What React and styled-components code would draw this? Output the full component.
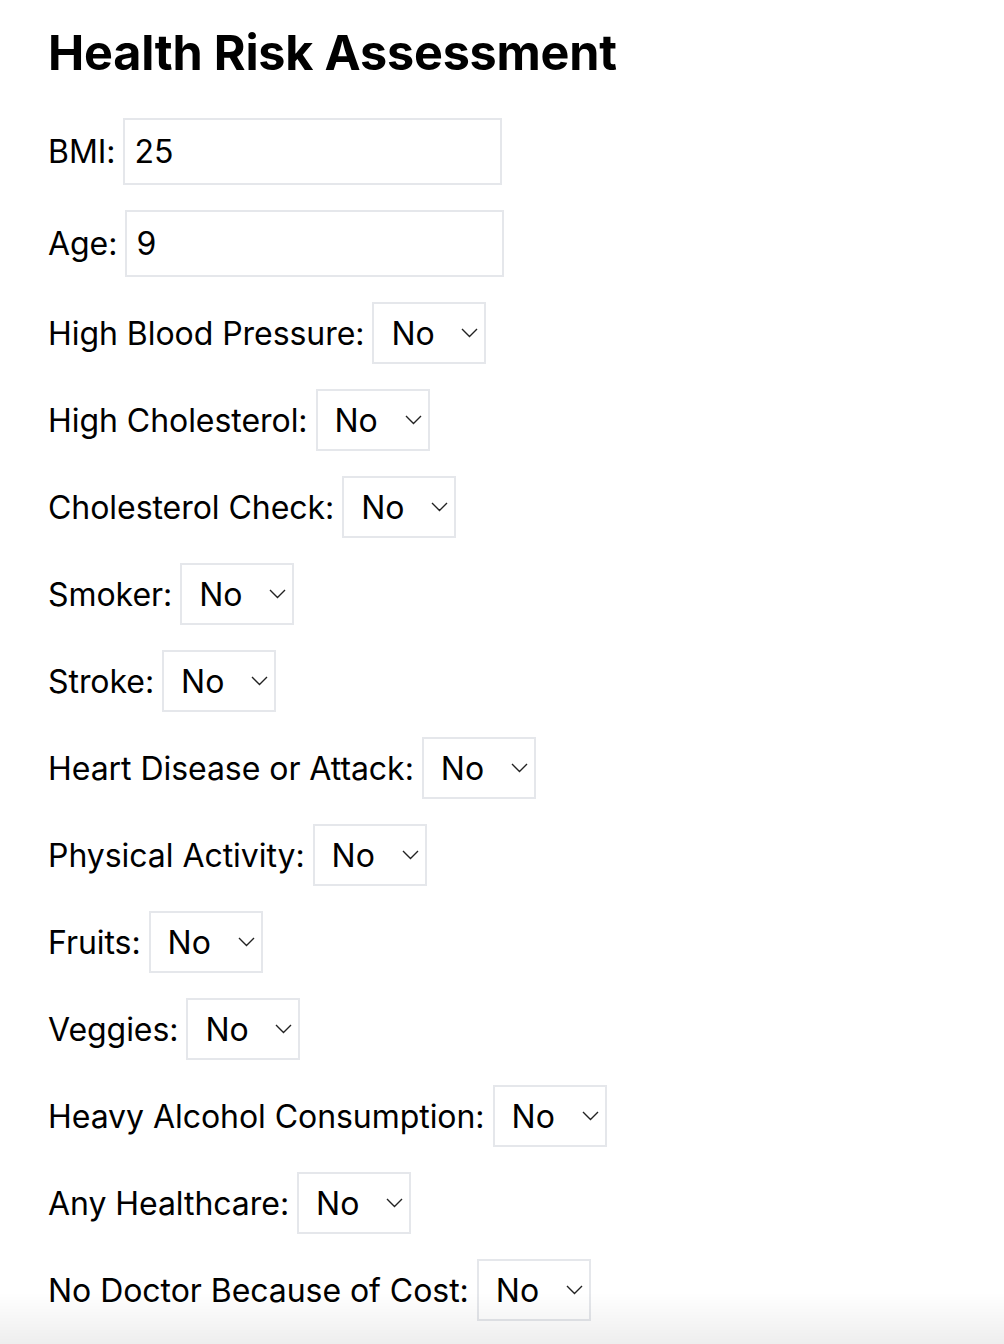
import React from 'react'
import styled, { createGlobalStyle } from 'styled-components'

const GlobalStyle = createGlobalStyle`
	* { box-sizing: border-box; }
	body {
		margin: 0;
		background: #fff;
		color: #000;
		font-family: Inter, "Noto Sans", sans-serif;
	}
`

const Page = styled.div`
	padding: 22px 48px 40px;
`

const Title = styled.h1`
	margin: 0 0 34px;
	font-size: 48.5px;
	font-weight: 700;
	line-height: 62px;
	letter-spacing: -0.2px;
`

const Form = styled.form`
	display: flex;
	flex-direction: column;
	gap: 25px;
`

const Row = styled.div`
	display: flex;
	align-items: center;
	font-size: 32px;
`

const Label = styled.label`
	margin-right: 8px;
	white-space: nowrap;
	letter-spacing: -0.05px;
`

const TextInput = styled.input`
	width: 379px;
	height: 67px;
	padding: 0 9px;
	border: 2px solid #e5e7eb;
	border-radius: 0;
	font: inherit;
	color: #000;
	outline: none;
`

const SelectWrap = styled.div`
	position: relative;
	width: 114px;
	height: 62px;
`

const Select = styled.select`
	appearance: none;
	width: 100%;
	height: 100%;
	padding: 0 0 0 17px;
	border: 2px solid #e5e7eb;
	border-radius: 0;
	background: #fff;
	font: inherit;
	color: #000;
	outline: none;
`

const Chevron = styled.svg`
	position: absolute;
	right: 8px;
	top: 50%;
	width: 17px;
	height: 10px;
	margin-top: -5px;
	pointer-events: none;
`

const Fade = styled.div`
	position: fixed;
	left: 0;
	right: 0;
	bottom: 0;
	height: 52px;
	background: linear-gradient(rgba(0,0,0,0), rgba(0,0,0,0.065));
	pointer-events: none;
`

const questions = [
	'High Blood Pressure',
	'High Cholesterol',
	'Cholesterol Check',
	'Smoker',
	'Stroke',
	'Heart Disease or Attack',
	'Physical Activity',
	'Fruits',
	'Veggies',
	'Heavy Alcohol Consumption',
	'Any Healthcare',
	'No Doctor Because of Cost'
]

const YesNo = ({ id }) => (
	<SelectWrap>
		<Select id={id} defaultValue="0">
			<option value="0">No</option>
			<option value="1">Yes</option>
		</Select>
		<Chevron viewBox="0 0 17 10">
			<path d="M1 1 L8.5 8.5 L16 1" fill="none" stroke="#222" strokeWidth="1.4" />
		</Chevron>
	</SelectWrap>
)

const App = () => {
	return (
		<Page>
			<GlobalStyle />
			<Title>Health Risk Assessment</Title>
			<Form>
				<Row>
					<Label htmlFor="bmi">BMI:</Label>
					<TextInput id="bmi" type="text" defaultValue="25" />
				</Row>
				<Row>
					<Label htmlFor="age">Age:</Label>
					<TextInput id="age" type="text" defaultValue="9" />
				</Row>
				{questions.map((q, i) => (
					<Row key={i}>
						<Label htmlFor={'q' + i}>{q}:</Label>
						<YesNo id={'q' + i} />
					</Row>
				))}
			</Form>
			<Fade />
		</Page>
	)
}

export default App
